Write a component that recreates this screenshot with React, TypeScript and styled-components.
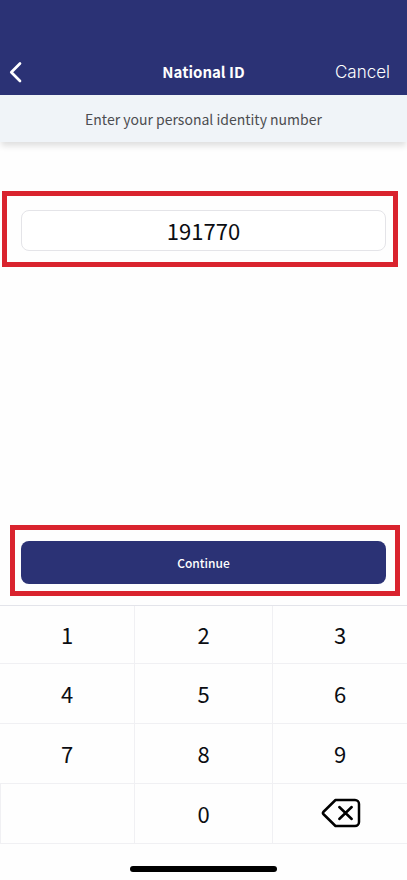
import React, { useState } from "react";
import styled, { createGlobalStyle } from "styled-components";

const navy = "#2b3275";
const line = "#f0f0f3";
const sans = `"Noto Sans CJK SC", "Noto Sans", sans-serif`;

const GlobalStyle = createGlobalStyle`
  *, *::before, *::after { box-sizing: border-box; }
  body { margin: 0; background: #fefefe; font-family: ${sans}; }
  button, input { font-family: inherit; margin: 0; }
`;

const Screen = styled.div`
  display: flex;
  flex-direction: column;
  min-height: 100vh;
`;

const Header = styled.header`
  display: grid;
  grid-template-columns: 1fr auto 1fr;
  align-items: center;
  padding: 48px 17px 0 8px;
  height: 95px;
  background: ${navy};
  color: #fff;
`;

const BackButton = styled.button`
  display: flex;
  justify-self: start;
  padding: 0;
  border: 0;
  background: none;
  color: inherit;
  cursor: pointer;
`;

const Title = styled.h1`
  margin: 0;
  padding-left: 9px;
  font-size: 15px;
  line-height: 24px;
  font-weight: 700;
`;

const CancelButton = styled.button`
  justify-self: end;
  padding: 0;
  border: 0;
  background: none;
  color: inherit;
  cursor: pointer;
  && {
    font-family: Inter, "Liberation Sans", sans-serif;
  }
  font-size: 17px;
  font-weight: 300;
  line-height: 24px;
`;

const Hint = styled.label`
  display: block;
  padding: 12px 16px 11px;
  background: #f0f4f8;
  box-shadow: 0 5px 6px -1px rgba(0, 0, 0, 0.12);
  color: #4c4d50;
  font-size: 14px;
  line-height: 24px;
  text-align: center;
`;

const Form = styled.form`
  display: flex;
  flex: 1;
  flex-direction: column;
  justify-content: space-between;
  padding: 49px 0 9px;
`;

const Highlight = styled.div<{ $part: "field" | "action" }>`
  border: 5px solid #d9232e;
  margin: ${(p) => (p.$part === "field" ? "0 9px 0 2px" : "0 7px 0 10px")};
  padding: ${(p) => (p.$part === "field" ? "14px 7px 11px 14px" : "11px 9px 7px 6px")};
`;

const IdInput = styled.input`
  display: block;
  width: 100%;
  height: 41px;
  padding: 0 12px 2px;
  border: 1px solid #e4e4e8;
  border-radius: 8px;
  background: #fff;
  color: #0b0d12;
  font-size: 22px;
  text-align: center;
  outline: none;
`;

const ContinueButton = styled.button`
  display: block;
  width: 100%;
  height: 43px;
  border: 0;
  border-radius: 8px;
  background: ${navy};
  color: #fff;
  font-size: 12px;
  font-weight: 500;
  cursor: pointer;
`;

const Keypad = styled.div`
  display: grid;
  grid-template-columns: 135fr 138fr 134fr;
  grid-template-rows: 58px repeat(3, 60px);
  border-top: 1px solid #e3e4ea;
`;

const Key = styled.button<{ $edge?: boolean }>`
  display: flex;
  align-items: center;
  justify-content: center;
  padding: 0 0 2px;
  border: 0;
  border-right: ${(p) => (p.$edge ? "0" : `1px solid ${line}`)};
  border-bottom: 1px solid ${line};
  background: none;
  color: #0b0d12;
  font-size: 22px;
  line-height: 32px;
  cursor: pointer;
`;

const DeleteKey = styled(Key)`
  padding: 0 0 1px 2px;
`;

const BlankKey = styled.div`
  border: 1px solid ${line};
  border-top: 0;
`;

const HomeArea = styled.footer`
  display: flex;
  justify-content: center;
  padding: 22px 0 8px;
`;

const HomeIndicator = styled.div`
  width: 36%;
  height: 6px;
  border-radius: 3px;
  background: #000;
`;

const digits = ["1", "2", "3", "4", "5", "6", "7", "8", "9"];

export default function App() {
  const [value, setValue] = useState("191770");
  const press = (digit: string) => setValue((v) => v + digit);

  return (
    <Screen>
      <GlobalStyle />
      <Header>
        <BackButton type="button" aria-label="Back">
          <svg width="16" height="24" viewBox="0 0 16 24" fill="none" stroke="currentColor" strokeWidth="2.7" strokeLinecap="round" strokeLinejoin="round">
            <path d="M12 3.5L3.3 12.3L12 21" />
          </svg>
        </BackButton>
        <Title>National ID</Title>
        <CancelButton type="button">Cancel</CancelButton>
      </Header>
      <Hint htmlFor="identity">Enter your personal identity number</Hint>
      <Form onSubmit={(e) => e.preventDefault()}>
        <Highlight $part="field">
          <IdInput id="identity" inputMode="none" value={value} onChange={(e) => setValue(e.target.value)} />
        </Highlight>
        <Highlight $part="action">
          <ContinueButton type="submit">Continue</ContinueButton>
        </Highlight>
      </Form>
      <Keypad>
        {digits.map((d, i) => (
          <Key key={d} type="button" $edge={i % 3 === 2} onClick={() => press(d)}>
            {d}
          </Key>
        ))}
        <BlankKey />
        <Key type="button" onClick={() => press("0")}>0</Key>
        <DeleteKey type="button" $edge aria-label="Delete" onClick={() => setValue((v) => v.slice(0, -1))}>
          <svg width="40" height="30" viewBox="0 0 40 30" fill="none" stroke="#000" strokeWidth="2.5" strokeLinecap="round" strokeLinejoin="round">
            <path d="M14.5 2H34a4 4 0 0 1 4 4V24a4 4 0 0 1-4 4H14.5L2.3 16Q1.5 15 2.3 14Z" />
            <path d="M18.3 9L30.7 21M30.7 9L18.3 21" />
          </svg>
        </DeleteKey>
      </Keypad>
      <HomeArea>
        <HomeIndicator />
      </HomeArea>
    </Screen>
  );
}
